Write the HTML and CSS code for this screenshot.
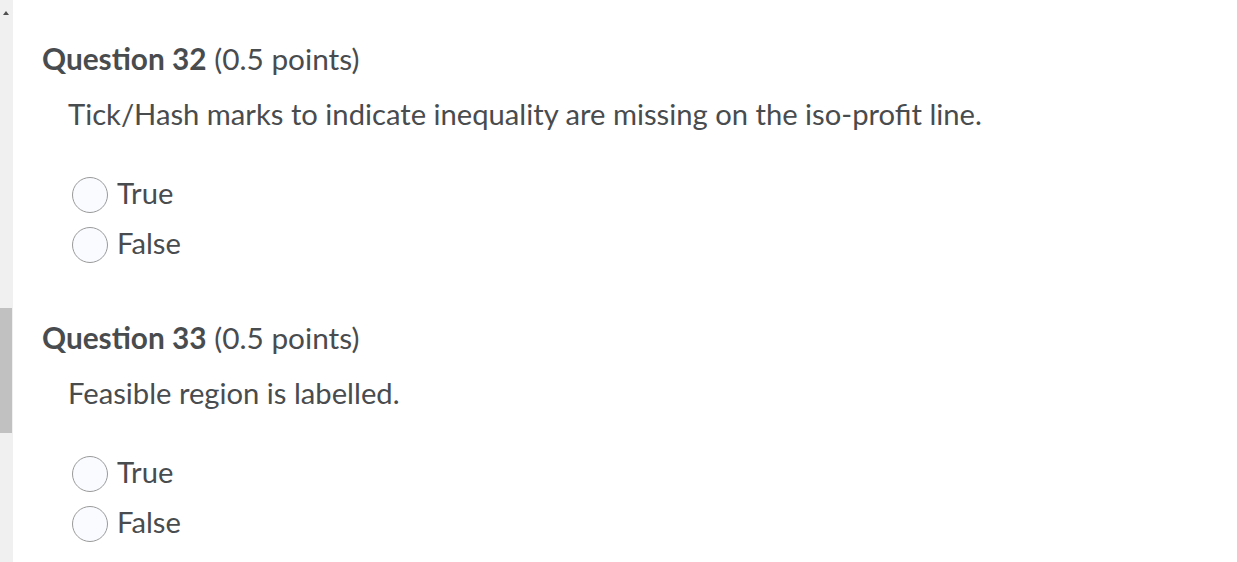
FILE: index.html
```html
<!DOCTYPE html>
<html>
<head>
<meta charset="utf-8">
<link rel="stylesheet" href="styles.css">
</head>
<body>
<div class="page">
  <div class="scrollbar">
    <div class="arrow"></div>
    <div class="thumb"></div>
  </div>
  <div class="content">
    <section class="question">
      <h2 class="q-title"><strong>Question 32</strong> (0.5 points)</h2>
      <p class="q-text">Tick/Hash marks to indicate inequality are missing on the iso-profit line.</p>
      <div class="options">
        <label class="option"><span class="radio"></span>True</label>
        <label class="option"><span class="radio"></span>False</label>
      </div>
    </section>
    <section class="question">
      <h2 class="q-title"><strong>Question 33</strong> (0.5 points)</h2>
      <p class="q-text">Feasible region is labelled.</p>
      <div class="options">
        <label class="option"><span class="radio"></span>True</label>
        <label class="option"><span class="radio"></span>False</label>
      </div>
    </section>
  </div>
</div>
</body>
</html>
```
FILE: styles.css
```css
html, body {
  margin: 0;
  padding: 0;
  background: #ffffff;
}
body {
  font-family: Lato, "Liberation Sans", sans-serif;
  color: #494c4e;
}
.page {
  display: flex;
  height: 562px;
  overflow: hidden;
}
.scrollbar {
  position: relative;
  width: 13px;
  flex: 0 0 13px;
  background: #f0f0f0;
}
.arrow {
  position: absolute;
  left: 3px;
  top: 11px;
  width: 0;
  height: 0;
  border-left: 3px solid transparent;
  border-right: 3px solid transparent;
  border-bottom: 4px solid #505050;
}
.thumb {
  position: absolute;
  left: 0;
  top: 308px;
  width: 12px;
  height: 125px;
  background: #c1c1c1;
}
.content {
  flex: 1;
  padding: 39px 0 0 29px;
}
.question {
  margin-bottom: 57px;
}
.q-title {
  margin: 0;
  font-size: 29.8px;
  font-weight: 400;
  line-height: 40px;
}
.q-title strong {
  font-weight: 700;
}
.q-text {
  margin: 15px 0 0 26px;
  font-size: 29.2px;
  line-height: 40px;
}
.options {
  margin: 41px 0 0 30px;
  display: flex;
  flex-direction: column;
  gap: 14px;
}
.option {
  display: flex;
  align-items: center;
  gap: 9px;
  font-size: 29.2px;
  line-height: 36px;
}
.radio {
  box-sizing: border-box;
  width: 36px;
  height: 36px;
  margin: 2px 0 -2px;
  border: 1px solid #9a9a9a;
  border-radius: 50%;
  background: #f9fbff;
}
```
